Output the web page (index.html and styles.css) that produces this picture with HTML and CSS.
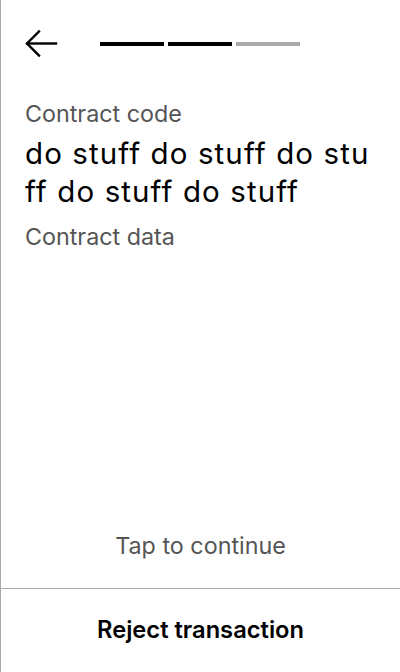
FILE: index.html
```html
<!DOCTYPE html>
<html lang="en">
<head>
<meta charset="utf-8">
<title>Confirm transaction</title>
<link rel="stylesheet" href="styles.css">
</head>
<body>
<div class="screen">
  <header class="header">
    <button class="back" aria-label="Back">
      <svg width="33" height="28" viewBox="0 0 33 28" fill="none" stroke="#000" stroke-width="2.4" stroke-linecap="square">
        <path d="M31 13.5 H2.5"/>
        <path d="M14 1.5 L2 13.5 L14 25.5"/>
      </svg>
    </button>
    <div class="progress">
      <span class="step done"></span>
      <span class="step done"></span>
      <span class="step"></span>
    </div>
  </header>
  <main class="content">
    <div class="label">Contract code</div>
    <div class="code">do stuff do stuff do stuff do stuff do stuff</div>
    <div class="label label-data">Contract data</div>
  </main>
  <div class="tap">Tap to continue</div>
  <button class="reject">Reject transaction</button>
</div>
</body>
</html>
```
FILE: styles.css
```css
* { box-sizing: border-box; }
html, body { margin: 0; padding: 0; background: #fff; }
body {
  font-family: Inter, "Noto Sans", sans-serif;
  color: #000;
}
.screen {
  height: 672px;
  width: 400px;
  border-left: 1px solid #aaa;
  display: flex;
  flex-direction: column;
}
.header {
  display: flex;
  align-items: center;
  padding: 30px 0 0 24px;
  height: 58px;
}
.back {
  border: 0;
  background: none;
  padding: 0;
  width: 33px;
  height: 28px;
  display: block;
  margin-top: -1px;
}
.back svg { display: block; }
.progress {
  display: flex;
  gap: 4px;
  margin-left: 42px;
  margin-top: -1px;
}
.step {
  width: 64px;
  height: 4px;
  background: #aaa;
}
.step.done { background: #000; }
.content {
  flex: 1;
  padding: 42px 25px 0 24px;
}
.label {
  font-size: 23.3px;
  line-height: 28px;
  color: #555;
}
.code {
  font-size: 29.5px;
  letter-spacing: 1.1px;
  line-height: 38px;
  margin-top: 6px;
  word-break: break-all;
}
.label-data { margin-top: 13px; }
.tap {
  text-align: center;
  font-size: 23.3px;
  line-height: 28px;
  color: #555;
  padding-bottom: 28px;
}
.reject {
  border: 0;
  border-top: 1px solid #aaa;
  background: none;
  height: 84px;
  width: 100%;
  font-family: Inter, "Noto Sans", sans-serif;
  font-size: 23.7px;
  font-weight: 600;
  color: #000;
  padding: 0 0 2px;
}
```
